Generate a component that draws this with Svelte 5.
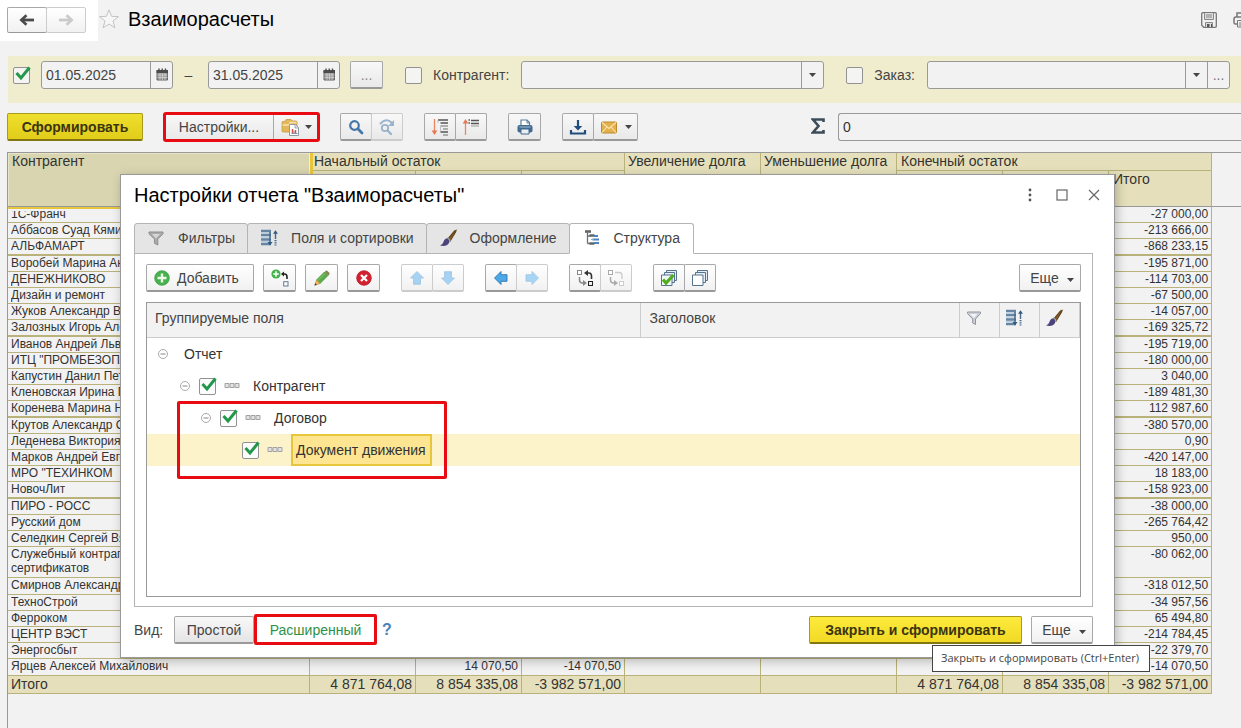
<script>
  const rows = [
    { name: '1С-Франч', total: '-27 000,00' },
    { name: 'Аббасов Суад Кямиль', total: '-213 666,00' },
    { name: 'АЛЬФАМАРТ', total: '-868 233,15', thick: true },
    { name: 'Воробей Марина Анатольевна', total: '-195 871,00' },
    { name: 'ДЕНЕЖНИКОВО', total: '-114 703,00' },
    { name: 'Дизайн и ремонт', total: '-67 500,00' },
    { name: 'Жуков Александр Викторович', total: '-14 057,00' },
    { name: 'Залозных Игорь Алексеевич', total: '-169 325,72', thick: true },
    { name: 'Иванов Андрей Львович', total: '-195 719,00' },
    { name: 'ИТЦ "ПРОМБЕЗОПАСНОСТЬ"', total: '-180 000,00' },
    { name: 'Капустин Данил Петрович', total: '3 040,00' },
    { name: 'Кленовская Ирина Павловна', total: '-189 481,30' },
    { name: 'Коренева Марина Николаевна', total: '112 987,60', thick: true },
    { name: 'Крутов Александр Сергеевич', total: '-380 570,00' },
    { name: 'Леденева Виктория', total: '0,90' },
    { name: 'Марков Андрей Евгеньевич', total: '-420 147,00' },
    { name: 'МРО "ТЕХИНКОМ', total: '18 183,00' },
    { name: 'НовочЛит', total: '-158 923,00', thick: true },
    { name: 'ПИРО - РОСС', total: '-38 000,00' },
    { name: 'Русский дом', total: '-265 764,42' },
    { name: 'Селедкин Сергей Вячеславович', total: '950,00' },
    { name: 'Служебный контрагент для выпуска сертификатов', total: '-80 062,00', double: true },
    { name: 'Смирнов Александр', total: '-318 012,50', tall: true },
    { name: 'ТехноСтрой', total: '-34 957,56' },
    { name: 'Ферроком', total: '65 494,80' },
    { name: 'ЦЕНТР ВЭСТ', total: '-214 784,45' },
    { name: 'Энергосбыт', total: '-22 379,70' },
    { name: 'Ярцев Алексей Михайлович', plus: '14 070,50', minus: '-14 070,50', total: '-14 070,50', tall: true }
  ];

  const tabs = [
    { id: 'filters', label: 'Фильтры', icon: 'funnel' },
    { id: 'fields', label: 'Поля и сортировки', icon: 'fields' },
    { id: 'style', label: 'Оформление', icon: 'brush' },
    { id: 'structure', label: 'Структура', icon: 'structure' }
  ];
  let tab = $state('structure');

  const tree = [
    { level: 0, name: 'Отчет', open: true },
    { level: 1, name: 'Контрагент', open: true, field: true },
    { level: 2, name: 'Договор', open: true, field: true },
    { level: 3, name: 'Документ движения', field: true, selected: true }
  ];

  const icons = {
    back: '<path d="M4 9h12" stroke="#4a4a4a" stroke-width="2.800"/><path d="M8.500 4.200 3.300 9l5.200 4.800" fill="none" stroke="#4a4a4a" stroke-width="2.600"/>',
    forward: '<path d="M2 9h12" stroke="#cacaca" stroke-width="2.800"/><path d="M9.500 4.200l5.200 4.800-5.200 4.800" fill="none" stroke="#cacaca" stroke-width="2.600"/>',
    floppy: '<path d="M1.700 2.700q0-1 1-1h12.600q1 0 1 1v12.600q0 1-1 1H3.700l-2-2z" fill="#f2f2f2" stroke="#777" stroke-width="1.300"/><path d="M4.500 2v6.500h9V2M5.500 16v-4.500h7V16" fill="#ddd" stroke="#888"/><path d="M6 4h6M6 6h6" stroke="#888"/><path d="M7 13h2.500v3H7zM11 13h1v3h-1z" fill="#555"/>',
    printer2: '<path d="M5 6V2h8v4M5 13H3.500Q2 13 2 11.500V8q0-2 2-2h10q2 0 2 2v3.500q0 1.500-1.500 1.500H13" fill="none" stroke="#777" stroke-width="1.500"/><path d="M5.500 9.500h7V16h-7zM7 12h4M7 14h4" fill="#f2f2f2" stroke="#777"/>',
    calendar: '<path d="M4 4.500h10.500v9.500H4z" fill="#9a9a9a" stroke="#666"/><path d="M3.500 4h11.500v3H3.500z" fill="#4c4c4c"/><path d="M6 2.500v2M9.200 2.500v2M12.500 2.500v2" stroke="#4c4c4c" stroke-width="1.400"/><path d="M4.500 9h10M4.500 11.500h10M7 7v7M9.500 7v7M12 7v7" stroke="#d5d5d5" stroke-width=".7"/>',
    folder: '<path d="M1 4.500q0-1 1-1h1.500L5 1.500h5L11.500 3H15q1 0 1 1v10H2q-1 0-1-1z" fill="#e3b85c" stroke="#c79a3c" stroke-width=".8"/><path d="M1.500 7H9V4.500h6.500" fill="none" stroke="#f8e3ab" stroke-width="1.300"/><path d="M8.500 6.500h6l3 3v8h-9z" fill="#fff" stroke="#8e99a5"/><path d="M14 6.500V10h3.500" fill="#dde3ea" stroke="#8e99a5" stroke-width=".8"/><path d="M11.500 11v4M14.500 12v3" stroke="#d64b41" stroke-width="1.500"/><path d="M13 13v2M10.500 15.500h6" stroke="#8494a5"/>',
    search: '<circle cx="7.500" cy="7.500" r="4.300" fill="none" stroke="#4676aa" stroke-width="2.200"/><path d="m10.800 10.800 4.200 4.200" stroke="#4676aa" stroke-width="2.800" stroke-linecap="round"/>',
    searchNext: '<g opacity=".5"><circle cx="7" cy="10" r="3.200" fill="none" stroke="#4676aa" stroke-width="1.800"/><path d="m9.500 12.500 3.500 3.500" stroke="#4676aa" stroke-width="2.200" stroke-linecap="round"/><path d="M2 6Q8-1 14 5" fill="none" stroke="#4676aa" stroke-width="2"/><path d="M16 2v6h-6z" fill="#4676aa"/></g>',
    expand: '<path d="M3.500 1v14" stroke="#ec8760" stroke-width="1.300"/><path d="M.7 12.500h5.600L3.500 17z" fill="#e67850"/><path d="M7 2h10M9.500 5H17M9.500 14H17" stroke="#555" stroke-width="1.600"/><path d="M9.500 8H17M12 11h5M12 17h5" stroke="#999" stroke-width="1.400"/><path d="M7 2v3M9.500 8v6" stroke="#aaa" stroke-width=".7"/>',
    collapse: '<path d="M3.500 3v14" stroke="#ec8760" stroke-width="1.300"/><path d="M.7 5.500h5.600L3.500 1z" fill="#e67850"/><path d="M9 2.500h8M9 5.500h8" stroke="#555" stroke-width="1.600"/><path d="M9 8h8" stroke="#999"/><path d="M6.500 2H8M6.500 5H8" stroke="#555" stroke-width="1.500"/>',
    print: '<path d="M5 8V2h6l2.500 2.500V8" fill="#fff" stroke="#5c7f9e" stroke-width="1.200"/><path d="M11 2v3h2.500" fill="none" stroke="#5c7f9e"/><rect x="1.500" y="7" width="15" height="7.500" rx="2" fill="#426b8f"/><path d="M3.500 9h11" stroke="#a5bfd3"/><path d="M5 11h8v5H5z" fill="#e8f0f6" stroke="#42698c"/>',
    save: '<path d="M9 2v8" stroke="#1f4e7e" stroke-width="2.200"/><path d="M4.700 8h8.600L9 12.500z" fill="#1f4e7e"/><path d="M2 12v3.500h14V12" fill="none" stroke="#1f4e7e" stroke-width="2.200"/>',
    mail: '<rect x="1.500" y="4" width="15" height="11" rx="1" fill="#e3b04e" stroke="#bd8b2c"/><path d="m2 4.500 7 6 7-6M2 14.500l5-5.500M16 14.500 11 9" fill="none" stroke="#fbe6b0" stroke-width="1.100"/>',
    funnel: '<path d="M2 3h14v1.800L10.800 10v6L7.500 14.300V10L2 4.800z" fill="#aaa" stroke="#8d8d8d"/><path d="M5 5h8l-4 4.500z" fill="#d6d6d6"/>',
    funnelLight: '<path d="M2.500 3h13v1.500L10.500 10v5.500L7.700 14V10L2.500 4.500z" fill="#ccd0d6" stroke="#91969d"/><path d="M5 5h7l-3 4z" fill="#f2f4f7"/>',
    fields: '<path d="M1 2h10M1 6h10M1 10.500h10M1 15h10" stroke="#6485a4" stroke-width="2.400"/><path d="M1 4h9M1 8.200h9M1 12.700h9" stroke="#b6cbdc" stroke-width="1.200"/><path d="M10 3v12" stroke="#44698c" stroke-width="1.500"/><path d="m7.500 13 2.500 3.500 2.500-3.500z" fill="#315a80"/><path d="M15.500 4v6" stroke="#44698c" stroke-width="1.400"/><path d="m13 4.800 2.500-3.500L18 4.800z" fill="#315a80"/><path d="M15.500 11v6" stroke="#44698c" stroke-width="2" stroke-dasharray="1.200 1"/>',
    brush: '<path d="m9 10 6.500-8 1.500-.5L16.500 3 11 12z" fill="#87632d" stroke="#65451c" stroke-width="1.300"/><path d="m8 9 3 3" stroke="#a8b0b5" stroke-width="2"/><path d="M8.500 9.500C5.500 9 5 12 4 14c-.7 1.300-2 2-3 2.500 4 1 7.500.5 9-2.500 1-2-.5-4-1.500-4.500z" fill="#4b437c"/>',
    structure: '<path d="M2 2.500h6" stroke="#666" stroke-width="2.600"/><path d="M4.500 3v11.500M4.500 7H8M4.500 14.500H8" fill="none" stroke="#65727d" stroke-width="1.300"/><path d="M6.500 6.500h5M6.500 14.500h5" stroke="#666" stroke-width="2.400"/><path d="M9.500 10.500h6.500M11 7h4M11 14h5" stroke="#4e84bd" stroke-width="2.200"/><path d="M8 10.500h3" stroke="#88a8c9" stroke-width="1.200"/>',
    add: '<circle cx="9" cy="9" r="7.300" fill="#47b14d" stroke="#3ca047" stroke-width=".8"/><path d="M9 4.500v9M4.500 9h9" stroke="#eefbe9" stroke-width="2.400"/>',
    addChild: '<circle cx="5" cy="5" r="4.600" fill="#43b04a"/><path d="M5 2.200v5.600M2.200 5h5.600" stroke="#fff" stroke-width="1.500"/><path d="M12 5h1.500q2.500 0 2.500 3v2" fill="none" stroke="#222" stroke-width="1.600"/><path d="M10 5 13 2.500v5z" fill="#222"/><rect x="12.700" y="12.700" width="4.300" height="4.300" fill="#f7fbff" stroke="#687b91"/>',
    pencil: '<path d="m3.500 11 8-8 3.500 3.500-8 8z" fill="#5cab49" stroke="#4b9642" stroke-width=".8"/><path d="M3.500 11 1.800 16.200 7 14.500z" fill="#edb85c" stroke="#b9833c" stroke-width=".6"/><path d="m1.500 16.500.8-2.300 1.500 1.500z" fill="#333"/><path d="m11.500 3 1.300-1.300q.7-.5 1.400 0l2.100 2.100q.6.700 0 1.400L15 6.500z" fill="#8b8351"/><path d="m5 11.500 7-7" stroke="#8ccb76" stroke-width=".9"/>',
    remove: '<circle cx="9" cy="9" r="7.300" fill="#d3202f" stroke="#b91b2a" stroke-width=".8"/><path d="m6 6 6 6M12 6l-6 6" stroke="#fff" stroke-width="2.200"/>',
    up: '<path d="m9 2.500 6.500 6.500H12.500v6.300h-7V9h-3z" fill="#a7d2f2" stroke="#9cc3e2" stroke-width=".8"/>',
    down: '<path d="m9 15.500 6.500-6.500H12.500V2.700h-7V9h-3z" fill="#a7d2f2" stroke="#9cc3e2" stroke-width=".8"/>',
    left: '<path d="M2.500 9 9 2.500v3.200h6v6.600H9v3.200z" fill="#4ea8e8" stroke="#2f76b0" stroke-width=".9"/>',
    right: '<path d="M15.500 9 9 2.500v3.200H3v6.600h6v3.200z" fill="#a7d6f4" stroke="#9cc3e2" stroke-width=".8"/>',
    move: '<rect x="1.500" y="1.500" width="4" height="4" fill="#fff" stroke="#888"/><path d="M10 4h3q2.500 0 2.500 3v3" fill="none" stroke="#333" stroke-width="1.600"/><path d="M8 4l4-3v6z" fill="#333"/><path d="M3.500 8v3q0 3 3 3h1" fill="none" stroke="#888" stroke-width="1.500"/><path d="M11 14l-4-3v6z" fill="#888"/><rect x="12.500" y="12.500" width="4" height="4" fill="#eee" stroke="#222"/>',
    moveOff: '<rect x="1.500" y="1.500" width="4" height="4" fill="#fff" stroke="#aaa"/><path d="M8 3.500h4q3 0 3 3V10" fill="none" stroke="#ccc" stroke-width="1.300"/><path d="M3.500 8v3q0 3 3 3h1" fill="none" stroke="#aaa" stroke-width="1.500"/><path d="M11 14l-4-3v6z" fill="#aaa"/><rect x="12.500" y="12.500" width="4" height="4" fill="#fff" stroke="#ccc"/>',
    checkAll: '<path d="M6.500 1.500h10v10h-10z" fill="#e6eef5" stroke="#56738e"/><path d="M4.500 3.500h10v10h-10z" fill="#e6eef5" stroke="#56738e"/><path d="M1.500 6h10.500v10.500H1.500z" fill="#f3f8fb" stroke="#56738e"/><path d="m3 10.500 3 3.500 7.500-8" fill="none" stroke="#4fae1f" stroke-width="3.200"/>',
    uncheckAll: '<path d="M6.500 1.500h10v10h-10z" fill="#e6eef5" stroke="#56738e"/><path d="M4.500 3.500h10v10h-10z" fill="#e6eef5" stroke="#56738e"/><path d="M1.500 6h10.500v10.500H1.500z" fill="#fff" stroke="#56738e"/>',
    dots: '<circle cx="9" cy="4" r="1.400" fill="#555"/><circle cx="9" cy="9" r="1.400" fill="#555"/><circle cx="9" cy="14" r="1.400" fill="#555"/>',
    maximize: '<rect x="4" y="4" width="10" height="10" fill="none" stroke="#666" stroke-width="1.200"/>',
    close: '<path d="m4 4 10 10M14 4 4 14" stroke="#666" stroke-width="1.200"/>',
    star: '<path d="m9 .8 2.300 5.800 6.200.3-4.900 3.900 1.700 6.100L9 13.500l-5.300 3.400 1.700-6.100L.5 6.900l6.200-.3z" fill="#f7f7f7" stroke="#c3c3c3" stroke-width=".9"/>',
    group: '<path d="M2 6.500h4v4H2zM7 6.500h4v4H7zM12 6.500h4v4h-4z" fill="#e2e2e2" stroke="#a3a3a3"/>',
    minus: '<circle cx="9" cy="9" r="4.500" fill="#fff" stroke="#aaa"/><path d="M6.500 9h5" stroke="#888"/>'
  };
</script>

{#snippet icon(name, size = 18)}
  <svg class="icon" width={size} height={size} viewBox="0 0 18 18" aria-hidden="true">{@html icons[name]}</svg>
{/snippet}

{#snippet caret()}
  <svg class="caret" width="7" height="4" viewBox="0 0 7 4" aria-hidden="true"><path d="M0 0h7L3.500 4z" fill="#444" /></svg>
{/snippet}

{#snippet check(id, label, checked)}
  <span class="check">
    <input type="checkbox" {id} aria-label={label} {checked} />
    <svg width="18" height="16" viewBox="0 0 18 16" aria-hidden="true">
      <path d="M2.500 7 7 12 15.500 1.500" fill="none" stroke="#23984a" stroke-width="3" />
    </svg>
  </span>
{/snippet}

{#snippet tool(name, label, disabled = false)}
  <button class="btn tool" aria-label={label} {disabled}>{@render icon(name)}</button>
{/snippet}

<div class="page">
  <header class="top">
    <div class="history">
      <div class="group">
        <button class="btn nav" aria-label="Назад">{@render icon('back')}</button>
        <button class="btn nav" aria-label="Вперед" disabled>{@render icon('forward')}</button>
      </div>
    </div>
    <button class="plain star" aria-label="Избранное">{@render icon('star', 20)}</button>
    <h1>Взаиморасчеты</h1>
    <div class="top-actions">
      <button class="plain" aria-label="Сохранить">{@render icon('floppy')}</button>
      <button class="plain" aria-label="Печать">{@render icon('printer2')}</button>
    </div>
  </header>

  <section class="filters">
    {@render check('use-period', 'Период', true)}
    <div class="field date from">
      <input type="text" aria-label="Начало периода" value="01.05.2025" />
      <button aria-label="Выбрать дату начала">{@render icon('calendar')}</button>
    </div>
    <span class="dash">–</span>
    <div class="field date">
      <input type="text" aria-label="Конец периода" value="31.05.2025" />
      <button aria-label="Выбрать дату конца">{@render icon('calendar')}</button>
    </div>
    <button class="btn tool period" aria-label="Выбрать период">...</button>
    {@render check('use-partner', 'Отбор по контрагенту', false)}
    <label for="partner">Контрагент:</label>
    <div class="field grow">
      <input id="partner" type="text" />
      <button aria-label="Открыть список">{@render caret()}</button>
    </div>
    <span class="order-check">{@render check('use-order', 'Отбор по заказу', false)}</span>
    <label for="order">Заказ:</label>
    <div class="field grow">
      <input id="order" type="text" />
      <button aria-label="Открыть список">{@render caret()}</button>
      <button aria-label="Выбрать">...</button>
    </div>
  </section>

  <section class="toolbar">
    <button class="btn primary run">Сформировать</button>
    <div class="group marked">
      <button class="btn settings">Настройки...</button>
      <button class="btn variants" aria-label="Варианты">{@render icon('folder')}{@render caret()}</button>
    </div>
    <div class="group">{@render tool('search', 'Найти')}{@render tool('searchNext', 'Найти далее', true)}</div>
    <div class="group">{@render tool('expand', 'Развернуть')}{@render tool('collapse', 'Свернуть')}</div>
    {@render tool('print', 'Печать')}
    <div class="group">
      {@render tool('save', 'Сохранить')}
      <button class="btn mail" aria-label="Отправить">{@render icon('mail')}{@render caret()}</button>
    </div>
    <label class="sigma" for="sum" aria-label="Сумма">
      <svg width="14" height="16" viewBox="0 0 14 16" aria-hidden="true"><path d="M12.500 4V1.500H2L7.500 8 2 14.500h10.500V12" fill="none" stroke="#3d4c59" stroke-width="2.600" /></svg>
    </label>
    <div class="field sum"><input id="sum" type="text" value="0" /></div>
  </section>

  <main class="report">
    <table class="sheet">
      <colgroup>
        <col class="c-name" /><col class="c-num" /><col class="c-num" /><col class="c-mid" />
        <col class="c-debt" /><col class="c-debt" /><col class="c-num" /><col class="c-num" /><col class="c-mid" /><col />
      </colgroup>
      <thead>
        <tr class="h1">
          <th class="current" rowspan="2">Контрагент</th>
          <th colspan="3">Начальный остаток</th>
          <th rowspan="2">Увеличение долга</th>
          <th rowspan="2">Уменьшение долга</th>
          <th colspan="3">Конечный остаток</th>
          <td class="rest" rowspan="2"></td>
        </tr>
        <tr class="h2"><th></th><th></th><th></th><th></th><th></th><th>Итого</th></tr>
      </thead>
      <tbody>
        {#each rows as r}
          <tr class:thick={r.thick} class:tall={r.tall} class:double={r.double}>
            <td class="name"><div>{r.name}</div></td>
            <td></td><td>{r.plus ?? ''}</td><td>{r.minus ?? ''}</td><td></td><td></td><td></td><td></td>
            <td>{r.total}</td><td class="rest"></td>
          </tr>
        {/each}
      </tbody>
      <tfoot>
        <tr>
          <th>Итого</th><td>4 871 764,08</td><td>8 854 335,08</td><td>-3 982 571,00</td><td></td><td></td>
          <td>4 871 764,08</td><td>8 854 335,08</td><td>-3 982 571,00</td><td class="rest"></td>
        </tr>
      </tfoot>
    </table>
  </main>

  <div class="dialog" role="dialog" aria-labelledby="dialog-title">
    <div class="title">
      <h2 id="dialog-title">Настройки отчета "Взаиморасчеты"</h2>
      <div class="window-actions">
        <button class="plain" aria-label="Меню">{@render icon('dots')}</button>
        <button class="plain" aria-label="Развернуть">{@render icon('maximize')}</button>
        <button class="plain" aria-label="Закрыть">{@render icon('close')}</button>
      </div>
    </div>

    <div class="tabs" role="tablist">
      {#each tabs as t}
        <button role="tab" aria-selected={tab === t.id} class:active={tab === t.id} onclick={() => (tab = t.id)}>
          {@render icon(t.icon)}<span>{t.label}</span>
        </button>
      {/each}
    </div>

    <div class="panel">
      <div class="panel-tools">
        <button class="btn add">{@render icon('add')}<span>Добавить</span></button>
        {@render tool('addChild', 'Добавить вложенную')}
        {@render tool('pencil', 'Изменить')}
        {@render tool('remove', 'Удалить')}
        <div class="group wide">{@render tool('up', 'Вверх', true)}{@render tool('down', 'Вниз', true)}</div>
        <div class="group wide">{@render tool('left', 'Влево')}{@render tool('right', 'Вправо', true)}</div>
        <div class="group wide">{@render tool('move', 'Сгруппировать')}{@render tool('moveOff', 'Разгруппировать', true)}</div>
        <div class="group wide">{@render tool('checkAll', 'Включить все')}{@render tool('uncheckAll', 'Выключить все')}</div>
        <button class="btn more">Еще{@render caret()}</button>
      </div>

      <div class="tree-box">
        <table class="tree">
          <colgroup><col class="t-name" /><col /><col class="t-icon" /><col class="t-icon" /><col class="t-icon" /></colgroup>
          <thead>
            <tr>
              <th>Группируемые поля</th>
              <th>Заголовок</th>
              <th class="ic" aria-label="Фильтры">{@render icon('funnelLight')}</th>
              <th class="ic" aria-label="Поля и сортировки">{@render icon('fields')}</th>
              <th class="ic" aria-label="Оформление">{@render icon('brush')}</th>
            </tr>
          </thead>
          <tbody>
            {#each tree as n, i}
              <tr class:selected={n.selected}>
                <td>
                  <div class="node l{n.level}">
                    {#if n.open}
                      <button class="plain toggle" aria-label="Свернуть">{@render icon('minus')}</button>
                    {/if}
                    {#if n.field}
                      {@render check('node-' + i, n.name, true)}
                      {@render icon('group')}
                    {/if}
                    <span class="text">{n.name}</span>
                  </div>
                </td>
                <td></td><td></td><td></td><td></td>
              </tr>
            {/each}
          </tbody>
        </table>
        <div class="mark"></div>
      </div>
    </div>

    <div class="footer">
      <span class="view">Вид:</span>
      <button class="btn simple">Простой</button>
      <button class="btn advanced">Расширенный</button>
      <a class="help" href="#help">?</a>
      <button class="btn primary apply">Закрыть и сформировать</button>
      <button class="btn more">Еще{@render caret()}</button>
      <div class="tooltip" role="tooltip">Закрыть и сформировать (Ctrl+Enter)</div>
    </div>
  </div>
</div>

<style>
  :global(body) {
    overflow: hidden;
    background: #f2f2f2;
  }
  .page, .page :global(*) {
    box-sizing: border-box;
  }
  .page {
    position: relative;
    display: flex;
    flex-direction: column;
    min-height: 100vh;
    overflow: hidden;
    background: #f2f2f2;
    color: #444;
    font: 14px/16px "Liberation Sans", Arial, sans-serif;
  }
  button, input {
    font: inherit;
    color: inherit;
  }
  button {
    padding: 0;
    cursor: pointer;
  }
  .icon, .caret {
    display: block;
    flex: none;
  }
  h1, h2 {
    margin: 0;
    color: #000;
    font-size: 20px;
    line-height: 24px;
    font-weight: 400;
  }

  .plain {
    display: flex;
    border: 0;
    background: none;
  }
  .btn {
    display: flex;
    flex: none;
    align-items: center;
    justify-content: center;
    height: 28px;
    border: 1px solid #a8a8a8;
    border-bottom: 2px solid #999;
    border-radius: 2px;
    background: linear-gradient(#fff, #f1f1f1);
  }
  .tool {
    width: 33px;
  }
  .group {
    display: flex;
    flex: none;
  }
  .group .tool {
    width: 32px;
  }
  .group .btn + .btn {
    margin-left: -1px;
  }
  .btn:disabled {
    border-color: #ccc;
  }
  .primary {
    border-color: #a89a1a;
    border-bottom-color: #81760f;
    background: linear-gradient(#fdea3c, #f2da25);
    color: #3b3510;
    font-weight: 700;
  }

  .top {
    display: flex;
    align-items: flex-start;
    height: 56px;
  }
  .history {
    padding: 7px 12px 8px 7px;
    background: #fff;
  }
  .group .nav {
    width: 40px;
    height: 26px;
    border-bottom-width: 1px;
  }
  .star {
    margin: 9px 9px 0 1px;
  }
  .top h1 {
    margin-top: 7px;
  }
  .top-actions {
    display: flex;
    gap: 14px;
    margin: 11px -9px 0 auto;
  }

  .check {
    position: relative;
    display: block;
    flex: none;
    width: 17px;
    height: 17px;
  }
  .check input {
    display: block;
    width: 17px;
    height: 17px;
    margin: 0;
    appearance: none;
    border: 1px solid #929292;
    border-radius: 2px;
    background: #fcfcfc;
  }
  .filters .check input {
    background: #f4f4f2;
  }
  .check svg {
    position: absolute;
    left: 1px;
    top: -1px;
    display: none;
    pointer-events: none;
  }
  .check input:checked + svg {
    display: block;
  }

  .filters {
    display: flex;
    align-items: center;
    height: 47px;
    margin-left: 8px;
    padding: 0 11px 9px 5px;
    background: #f0edcf;
  }
  .field {
    display: flex;
    height: 28px;
    overflow: hidden;
    border: 1px solid #999;
    border-radius: 3px;
    background: #f2f2f2;
  }
  .field input {
    flex: 1;
    width: 0;
    min-width: 0;
    padding: 0 4px;
    border: 0;
    outline: 0;
    background: none;
  }
  .field button {
    display: flex;
    align-items: center;
    justify-content: center;
    width: 22px;
    border: 0;
    border-left: 1px solid #999;
    background: none;
    color: #777;
  }
  .date {
    flex: none;
    width: 132px;
  }
  .from {
    margin-left: 11px;
  }
  .dash {
    width: 35px;
    padding-right: 4px;
    text-align: center;
  }
  .period {
    margin: 0 22px 0 10px;
    color: #888;
    background: linear-gradient(#f8f8f8, #e9e9e9);
  }
  .filters label {
    flex: none;
    margin: 0 12px 0 11px;
  }
  .order-check {
    margin-left: 22px;
  }
  .grow {
    flex: 1;
  }

  .toolbar {
    display: flex;
    align-items: center;
    gap: 21px;
    padding: 10px 0 11px 7px;
  }
  .toolbar .btn {
    background: linear-gradient(#f8f8f8, #e9e9e9);
  }
  .toolbar .run {
    width: 136px;
    background: linear-gradient(#efdf2d, #e1cd1a);
  }
  .marked {
    outline: 3px solid #e80c12;
    outline-offset: -2px;
    border-radius: 2px;
  }
  .settings {
    width: 110px;
  }
  .variants {
    width: 46px;
    gap: 6px;
  }
  .mail {
    width: 45px;
    gap: 7px;
  }
  .sigma {
    margin: 0 -8px 0 auto;
  }
  .sum {
    width: 403px;
    border-right: 0;
    border-radius: 3px 0 0 3px;
    color: #333;
  }

  .report {
    flex: 1;
    margin-left: 7px;
    border-left: 1px solid #999;
    border-top: 1px solid #999;
  }
  .sheet {
    width: 100%;
    table-layout: fixed;
    border-collapse: separate;
    border-spacing: 0;
    color: #333;
  }
  .c-name { width: 302px; }
  .c-num { width: 106px; }
  .c-mid { width: 103px; }
  .c-debt { width: 136px; }
  .sheet th, .sheet td {
    padding: 0 3px;
    border-right: 1px solid #b9b27a;
    border-bottom: 1px solid #b9b27a;
    font-weight: 400;
    vertical-align: top;
  }
  .sheet th {
    background: #e5e0bb;
    text-align: left;
    white-space: nowrap;
  }
  .sheet thead th[rowspan], .sheet .h2 th, .sheet thead .rest {
    border-bottom-color: #999;
  }
  .h1 { height: 18px; }
  .h2 { height: 36px; }
  .sheet .current {
    position: relative;
    border-right: 1px solid #f4f0d4;
    background: #d9d5b0;
    box-shadow: inset 1px 1px #e8e4c6, 3px 0 #e8c63c, 0 2px #e8c63c, 0 4px #f2f2f2;
  }
  .sheet td.rest {
    border-right: 0;
    border-bottom: 0;
  }
  .sheet thead td.rest {
    border-bottom: 1px solid #999;
  }
  .sheet thead th {
    padding-left: 4px;
  }
  .sheet thead th[rowspan]:not(.current) {
    padding-left: 3px;
  }
  tbody tr { height: 16px; }
  tbody tr.thick, tbody tr.tall { height: 17px; }
  tbody tr.double { height: 31px; }
  .sheet .thick td:not(.rest) { border-bottom-width: 2px; }
  .sheet tbody td {
    font-size: 12px;
    line-height: 14px;
    text-align: right;
  }
  .sheet .name div {
    height: 14px;
    overflow: hidden;
    text-align: left;
  }
  .sheet .double .name div {
    width: 220px;
    height: 28px;
  }
  .sheet tfoot td {
    text-align: right;
  }
  .sheet tfoot th, .sheet tfoot td:not(.rest) {
    height: 18px;
    background: #e5e0bb;
  }

  .dialog {
    position: absolute;
    top: 174px;
    left: 120px;
    right: 126px;
    padding: 0 21px 13px 13px;
    border: 1px solid #999;
    background: #fff;
    box-shadow: 2px 3px 10px rgba(0, 0, 0, .25);
  }
  .title {
    display: flex;
    align-items: center;
    justify-content: space-between;
    height: 48px;
    padding-bottom: 9px;
  }
  .window-actions {
    display: flex;
    gap: 14px;
    margin-right: -10px;
  }
  .tabs {
    display: flex;
    margin-bottom: -1px;
  }
  .tabs button {
    display: flex;
    align-items: center;
    gap: 13px;
    height: 31px;
    margin-right: -1px;
    padding: 0 12px 1px;
    border: 1px solid #b4b4b4;
    border-radius: 3px 3px 0 0;
    background: #e5e5e5;
  }
  .tabs .active {
    padding: 0 13px 1px;
    border-bottom-color: #fff;
    background: #fff;
  }
  .panel {
    padding: 10px 11px 9px;
    border: 1px solid #b4b4b4;
  }
  .panel-tools {
    display: flex;
    gap: 9px;
  }
  .panel-tools .wide {
    margin-left: 12px;
  }
  .add {
    width: 108px;
    justify-content: flex-start;
    gap: 6px;
    padding-left: 6px;
  }
  .more {
    width: 62px;
    gap: 8px;
    padding-left: 4px;
  }
  .more .caret {
    margin-top: 4px;
  }
  .panel-tools .more {
    margin-left: auto;
  }
  .tree-box {
    position: relative;
    height: 295px;
    margin-top: 10px;
    border: 1px solid #999;
  }
  .tree {
    width: 100%;
    table-layout: fixed;
    border-collapse: separate;
    border-spacing: 0;
  }
  .t-name { width: 53%; }
  .t-icon { width: 40px; }
  .tree th {
    height: 35px;
    padding: 0 8px 4px;
    border-right: 1px solid #ccc;
    border-bottom: 1px solid #ccc;
    background: #f2f2f2;
    font-weight: 400;
    text-align: left;
  }
  .tree .ic {
    padding: 0 5px 4px;
  }
  .tree td {
    height: 32px;
    padding: 0;
  }
  .selected {
    background: #fdf3cb;
  }
  .node {
    display: flex;
    align-items: center;
    height: 32px;
    padding-left: 7px;
    white-space: nowrap;
    color: #333;
  }
  .l1 { padding-left: 29px; }
  .l2 { padding-left: 50px; }
  .l3 { padding-left: 95px; }
  .node .check {
    margin: 0 7px 0 5px;
  }
  .l3 .check {
    margin-left: 0;
  }
  .text {
    margin-left: 12px;
  }
  .l3 .text {
    margin-left: 7px;
    padding: 6px 4px 6px 3px;
    border: 2px solid #e8c63c;
    background: #fde592;
  }
  .mark {
    position: absolute;
    top: 98px;
    left: 30px;
    width: 270px;
    height: 78px;
    border: 3px solid #e80c12;
    border-radius: 2px;
    pointer-events: none;
  }
  .footer {
    position: relative;
    display: flex;
    align-items: center;
    padding-top: 9px;
  }
  .view {
    width: 40px;
  }
  .simple {
    width: 80px;
    background: linear-gradient(#f8f8f8, #e5e5e5);
  }
  .advanced {
    width: 123px;
    height: 31px;
    margin: -2px 0 -1px;
    border: 3px solid #e80c12;
    background: #fff;
    color: #2e9148;
  }
  .help {
    margin-left: 5px;
    color: #4a82bd;
    font-size: 16px;
    font-weight: 700;
    text-decoration: none;
  }
  .apply {
    width: 213px;
    margin: 0 9px 0 auto;
  }
  .tooltip {
    position: absolute;
    top: 38px;
    right: -57px;
    padding: 4px 10px 5px 8px;
    border: 1px solid #444;
    background: #fff;
    color: #444;
    font: 11px/16px "Open Sans", "Noto Sans", sans-serif;
    white-space: nowrap;
  }
</style>
